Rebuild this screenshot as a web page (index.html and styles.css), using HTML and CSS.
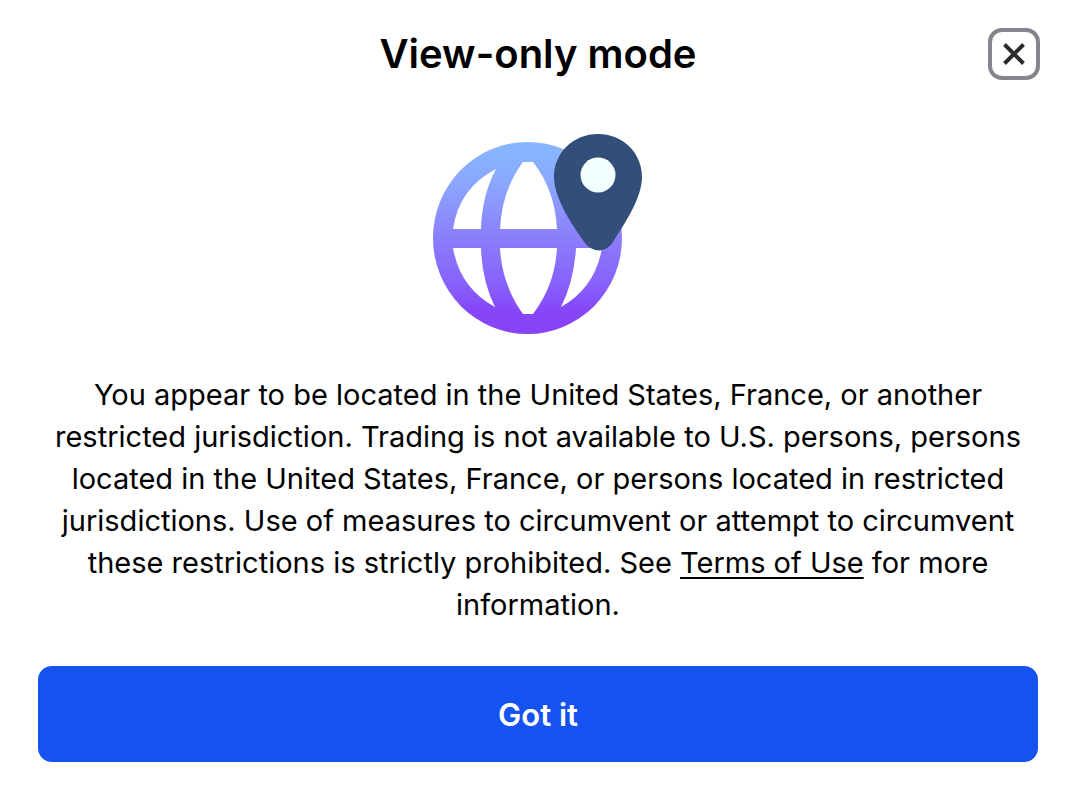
FILE: index.html
```html
<!DOCTYPE html>
<html lang="en">
<head>
    <meta charset="UTF-8">
    <meta name="viewport" content="width=device-width, initial-scale=1.0">
    <title>View-only mode</title>
    <link rel="stylesheet" href="styles.css">
</head>
<body>
    <main class="modal">
        <header class="modal-header">
            <h1>View-only mode</h1>
            <button class="close" type="button" aria-label="Close">
                <svg width="24" height="24" viewBox="0 0 24 24" aria-hidden="true">
                    <path d="M2.5 2.5L21.5 21.5M21.5 2.5L2.5 21.5" fill="none" stroke="#2c2c2e" stroke-width="4"/>
                </svg>
            </button>
        </header>

        <svg class="globe" width="210" height="200" viewBox="0 0 210 200" aria-hidden="true">
            <defs>
                <linearGradient id="sky" x1="0" y1="0" x2="0" y2="1">
                    <stop offset="0" stop-color="#86b8ff"/>
                    <stop offset="0.22" stop-color="#8ba6ff"/>
                    <stop offset="0.5" stop-color="#8b7efa"/>
                    <stop offset="0.75" stop-color="#8760fb"/>
                    <stop offset="0.88" stop-color="#8546f7"/>
                    <stop offset="1" stop-color="#8a42f6"/>
                </linearGradient>
            </defs>
            <path fill="url(#sky)" fill-rule="evenodd" d="M94.5 8A94.5 96 0 0 1 94.5 200A94.5 96 0 0 1 94.5 8Z
                M63 35Q49 61 48 95H20Q26 54 63 35Z
                M90 28H100Q122 56 124 95H67Q69 56 90 28Z
                M67 114H124Q122 151 100 180H90Q69 151 67 114Z
                M20 114H48Q49 147 62 173Q27 154 20 114Z
                M143 114H169Q162 154 128 173Q141 147 143 114Z"/>
            <path fill="#334e79" d="M165 0C190 0 209 19 209 43C209 64 192 89 180 108C173 119 160 119 152 109C139 91 121 64 121 43C121 19 140 0 165 0Z"/>
            <circle cx="165" cy="41" r="17.5" fill="#f3feff"/>
        </svg>

        <p class="message">
            You appear to be located in the United States, France, or another restricted jurisdiction. Trading is not available to U.S. persons, persons located in the United States, France, or persons located in restricted jurisdictions. Use of measures to circumvent or attempt to circumvent these restrictions is strictly prohibited. See <a href="#">Terms of Use</a> for more information.
        </p>

        <button class="confirm" type="button">Got it</button>
    </main>
</body>
</html>
```
FILE: styles.css
```css
* {
    box-sizing: border-box;
}
body {
    margin: 0;
    background: #fff;
    color: #000;
    font-family: Inter, sans-serif;
}
.modal {
    display: flex;
    flex-direction: column;
    align-items: center;
    padding: 28px 36px 30px 38px;
}
.modal-header {
    display: grid;
    grid-template-columns: 52px 1fr 52px;
    align-items: center;
    width: 100%;
    margin-bottom: 54px;
}
h1 {
    grid-column: 2;
    margin: 0;
    font-size: 40px;
    font-weight: 600;
    line-height: 52px;
    text-align: center;
}
.close {
    display: flex;
    align-items: center;
    justify-content: center;
    width: 52px;
    height: 52px;
    margin-left: 2px;
    padding: 0;
    border: 4px solid #85858b;
    border-radius: 14px;
    background: #fff;
    cursor: pointer;
}
.globe {
    margin-bottom: 40px;
}
.message {
    margin: 0 0 40px;
    padding: 0 14px;
    font-size: 29px;
    line-height: 42px;
    text-align: center;
}
.message a {
    color: inherit;
    text-decoration-thickness: 2px;
    text-underline-offset: 4px;
}
.confirm {
    width: 100%;
    height: 96px;
    border: none;
    border-radius: 14px;
    background: #1652f0;
    color: #fff;
    font-family: inherit;
    font-size: 31px;
    font-weight: 600;
    cursor: pointer;
}
.confirm:hover {
    background: #1148d8;
}
```
